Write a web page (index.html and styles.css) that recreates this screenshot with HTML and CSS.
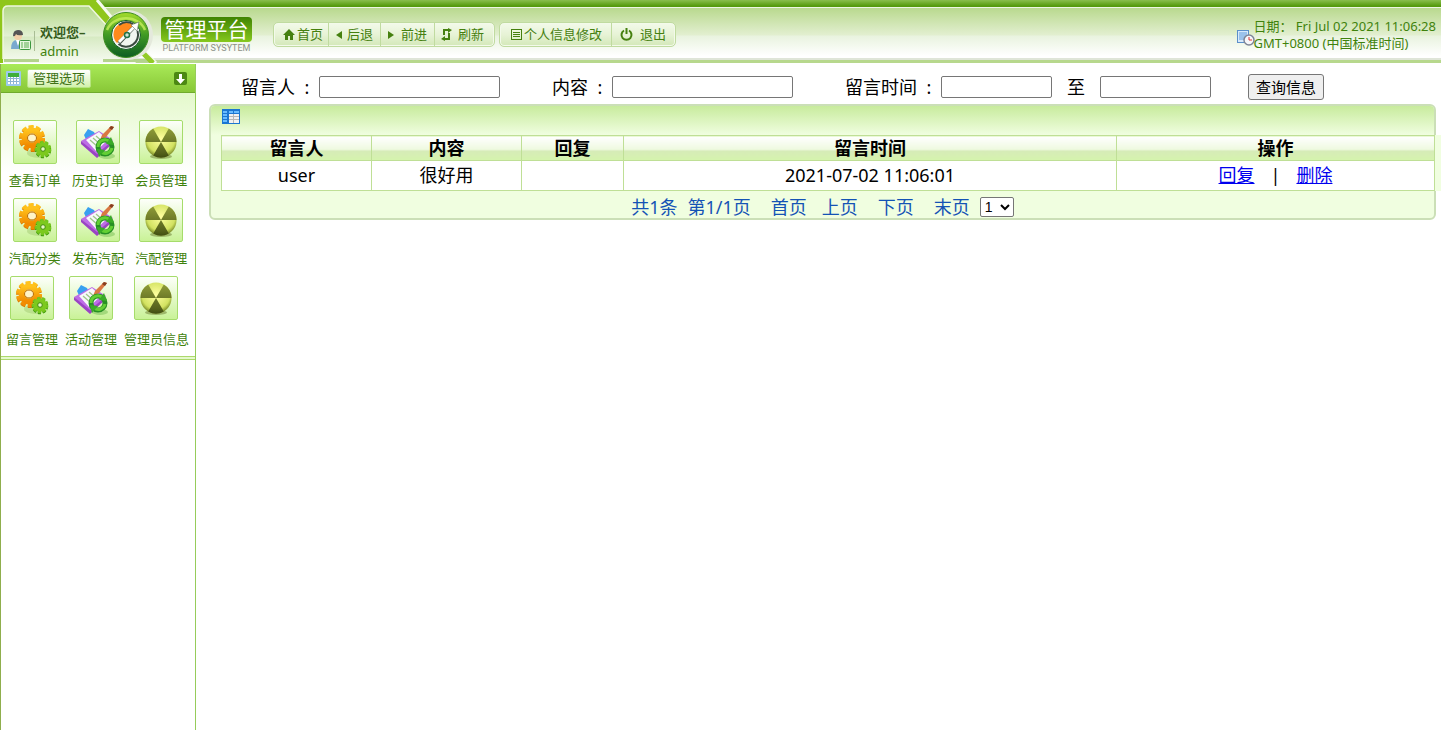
FILE: index.html
```html
<!DOCTYPE html>
<html lang="zh-CN">
<head>
    <meta charset="UTF-8">
    <meta name="viewport" content="width=device-width, initial-scale=1.0">
    <title>管理平台</title>
    <link rel="stylesheet" href="styles.css">
</head>
<body>
    <!-- shared icons -->
    <svg width="0" height="0" class="defs">
        <defs>
            <linearGradient id="gold" x1="0" y1="0" x2="0" y2="1"><stop offset="0" stop-color="#ffc21c"/><stop offset="1" stop-color="#f18a00"/></linearGradient>
            <radialGradient id="ballLight" cx=".5" cy=".4" r=".6"><stop offset="0" stop-color="#ffffa0"/><stop offset="1" stop-color="#c3d84c"/></radialGradient>
            <linearGradient id="ballDark" x1="0" y1="0" x2="0" y2="1"><stop offset="0" stop-color="#8d9a38"/><stop offset="1" stop-color="#4a5516"/></linearGradient>
            <radialGradient id="ballShade" cx=".5" cy=".4" r=".6"><stop offset=".75" stop-color="#4a5a10" stop-opacity="0"/><stop offset="1" stop-color="#3b4810" stop-opacity=".6"/></radialGradient>
            <linearGradient id="ring" x1="0" y1="0" x2="0" y2="1"><stop offset="0" stop-color="#a4dc2c"/><stop offset=".5" stop-color="#3f9a24"/><stop offset="1" stop-color="#0d5c22"/></linearGradient>
            <linearGradient id="tab" x1="0" y1="0" x2="0" y2="1"><stop offset="0" stop-color="#b2d787"/><stop offset=".53" stop-color="#e3f1d4"/><stop offset=".54" stop-color="#d6eac2"/><stop offset="1" stop-color="#f7fbf2"/></linearGradient>
        </defs>
        <symbol id="gears" viewBox="0 0 36 36">
            <ellipse cx="22" cy="29" rx="12" ry="5" fill="#8fb95a" opacity=".35"/>
            <circle cx="15" cy="15" r="10.500" fill="none" stroke="#d87800" stroke-width="5" stroke-dasharray="4.200 2.400"/>
            <circle cx="15" cy="14" r="10.500" fill="none" stroke="url(#gold)" stroke-width="5" stroke-dasharray="4.400 2.200"/>
            <circle cx="15" cy="14" r="7.500" fill="none" stroke="url(#gold)" stroke-width="6"/>
            <ellipse cx="15" cy="14" rx="4.500" ry="4" fill="#fff4c8" stroke="#b96a00"/>
            <circle cx="26" cy="26" r="6.500" fill="none" stroke="#3f9a0c" stroke-width="3.500" stroke-dasharray="2.800 1.740"/>
            <circle cx="26" cy="25" r="6.500" fill="none" stroke="#74c51d" stroke-width="3.500" stroke-dasharray="3 1.540"/>
            <circle cx="26" cy="25" r="4.500" fill="none" stroke="#7cc91e" stroke-width="4.500"/>
            <circle cx="26" cy="25" r="2.300" fill="#e6f8c4" stroke="#3f8a0c"/>
        </symbol>
        <symbol id="notes" viewBox="0 0 36 36">
            <path d="M4 11l4-6 6 3 2 4-9 6z" fill="#38a0f0"/>
            <path d="M1 17L19 7l14 9-16 16z" fill="#bd6de6"/>
            <path d="M1 17l16 13 15-13v3L17 34 1 20z" fill="#9a44c4"/>
            <path d="M6 16L19 8l9 8-12 11z" fill="#f8f8fb"/>
            <path d="M10 16l8 7M13 14l7 6M16 12l7 6" stroke="#9fc789" stroke-width="1.300"/>
            <path d="M22 11L31 2l3 1-8 10-6 3z" fill="#d97842"/><path d="M29 4l2-2 3 1-2 3z" fill="#873f20"/>
            <ellipse cx="27" cy="32" rx="8" ry="3" fill="#75bd52" opacity=".5"/>
            <circle cx="25" cy="23" r="7" fill="none" stroke="#279024" stroke-width="5"/>
            <path d="M18 23a7 7 0 0 1 12-5M32 24a7 7 0 0 1-11 4" fill="none" stroke="#63cf34" stroke-width="3"/>
            <path d="M31 13l3 8-8-1zM19 33l-2-8 8 1z" fill="#3aab28"/>
        </symbol>
        <symbol id="ball" viewBox="0 0 36 36">
            <ellipse cx="18" cy="32.500" rx="11" ry="2.500" fill="#6a7a30" opacity=".5"/>
            <circle cx="18" cy="18" r="15.500" fill="url(#ballLight)"/>
            <path d="M18 18L2.500 18A15.500 15.500 0 0 1 10.200 4.600zM18 18l7.800-13.400A15.500 15.500 0 0 1 33.500 18zM18 18l7.800 13.400A15.500 15.500 0 0 1 10.200 31.400z" fill="url(#ballDark)"/>
            <circle cx="18" cy="18" r="15.500" fill="url(#ballShade)"/>
        </symbol>
    </svg>

    <header class="header">
        <div class="welcome">
            <svg class="welcome-art" width="160" height="63" viewBox="0 0 160 63">
                <path d="M0 0H98L126 32 155 63H150L126 40H3V63H0z" fill="#8fc61a"/>
                <path d="M97 0L118 25M144 51L156 63" stroke="#f6faef" stroke-width="3"/>
                <path d="M3 63V11q0-5 5-5H89L109 28 136 63z" fill="url(#tab)"/>
                <path d="M3 59V11q0-5 5-5H89L109 28" fill="none" stroke="#eff8df" stroke-width="1.500"/>
                <path d="M4 59H39V62H4zM103 59H148V62H103z" fill="#b3d38c"/>
                <path d="M140 50l13 13" stroke="#93cb28" stroke-width="5"/>
                <circle cx="128" cy="35" r="25" fill="#e4e9dc"/>
                <circle cx="126" cy="35" r="22.500" fill="url(#ring)" stroke="#3c8d1d"/>
                <path d="M107 30a20 17 0 0 1 38 0" fill="none" stroke="#c5ee5c" stroke-width="2.500" opacity=".8"/>
                <circle cx="126" cy="35" r="14.500" fill="#f1f5f0" stroke="#0f5b22"/>
                <path d="M134 26a12 12 0 1 0-17 17l9-8z" fill="#ff8a1c"/>
                <path d="M119 25a12 12 0 0 1 14-1M137.500 31a12 12 0 0 1-19 13" fill="none" stroke="#3a4a40" stroke-width="2"/>
                <path d="M119 43L133 28" stroke="#45544b" stroke-width="4"/>
                <path d="M119 42L134 27" stroke="#fff" stroke-width="3"/>
                <path d="M139 22l-2 9-6-6z" fill="#fff" stroke="#45544b" stroke-width=".5"/>
                <circle cx="127" cy="35" r="2.500" fill="#cfe5d4" stroke="#237247" stroke-width="1.500"/>
            </svg>
            <svg class="user-icon" width="20" height="22" viewBox="0 0 20 22">
                <path d="M0 19q0-9 6-9t7 9z" fill="#78a9cf"/><path d="M5 10h4l-2 6z" fill="#fff"/>
                <circle cx="7" cy="6" r="4" fill="#f3d0a9"/><path d="M2 6q0-6 5-6t5 5q-6 1-7-1-1 3-3 2z" fill="#555"/>
                <rect x="8.500" y="10.500" width="11" height="9" rx="1" fill="#e6f7df" stroke="#3b973e"/>
                <path d="M10 13h2M10 15h2M10 17h2M13 13h5M13 15h5M13 17h5" stroke="#5cad53"/>
            </svg>
            <div class="welcome-text"><b>欢迎您–</b><span>admin</span></div>
        </div>
        <div class="brand">
            <div class="brand-name">管理平台</div>
            <div class="brand-sub">PLATFORM SYSYTEM</div>
        </div>
        <nav class="nav">
            <a href="#"><svg width="12" height="12" viewBox="0 0 12 12"><path d="M6 0l6 6h-2v5H7V7H5v4H2V6H0z"/></svg>首页</a>
            <a href="#"><svg width="8" height="8" viewBox="0 0 8 8"><path d="M7 0v8L1 4z"/></svg>后退</a>
            <a href="#"><svg width="8" height="8" viewBox="0 0 8 8"><path d="M1 0v8l6-4z"/></svg>前进</a>
            <a href="#" class="refresh"><svg width="11" height="13" viewBox="0 0 11 13"><path d="M3 7V2h5M8 5v6H3" fill="none" stroke="#45800f" stroke-width="2"/><path d="M7 0l4 2-4 3zM4 8v5l-4-2z"/></svg>刷新</a>
        </nav>
        <nav class="nav nav-user">
            <a href="#"><svg width="11" height="11" viewBox="0 0 11 11"><path d="M0 0h11v11H0zM1 1v9h9V1zM2 3h7v1H2zM2 5h7v1H2zM2 7h7v1H2z" fill-rule="evenodd"/></svg>个人信息修改</a>
            <a href="#"><svg width="13" height="13" viewBox="0 0 13 13"><path d="M4 2.500a5 5 0 1 0 5 0M6.500 0v6" fill="none" stroke="#45800f" stroke-width="2"/></svg>退出</a>
        </nav>
        <div class="date">
            <svg width="18" height="16" viewBox="0 0 18 16">
                <rect x=".5" y=".5" width="11" height="12" fill="#d7e9fb" stroke="#5b8fca"/>
                <path d="M2 3h8M2 5h8M2 7h6M2 9h5" stroke="#5f9bdc"/>
                <circle cx="12" cy="10" r="5" fill="#f6f7fa" stroke="#7d8496" stroke-width="1.500"/>
                <path d="M12 7v3h3" fill="none" stroke="#d33"/>
            </svg>
            <span>日期：&nbsp;Fri Jul 02 2021 11:06:28<br>GMT+0800 (中国标准时间)</span>
        </div>
    </header>

    <div class="page">
        <aside class="sidebar">
            <div class="sidebar-title">
                <svg width="15" height="15" viewBox="0 0 15 15">
                    <rect width="15" height="15" rx="1" fill="#9cc9ec"/><rect x="2" y="2" width="11" height="11" fill="#fff"/>
                    <path d="M2 7.500h11M2 10.500h11M4.500 5v8M7.500 5v8M10.500 5v8" stroke="#8eb3d3"/>
                    <path d="M2 2h11v4H2z" fill="#3eae3a"/>
                </svg>
                <h2>管理选项</h2>
                <button type="button" class="toggle" aria-label="收起">
                    <svg width="13" height="13" viewBox="0 0 13 13"><rect width="13" height="13" rx="2" fill="#4c8813"/><path d="M5 2h3v5h3l-4.500 5L2 7h3z" fill="#fff"/></svg>
                </button>
            </div>
            <div class="menu">
                <div class="menu-row">
                    <a href="#"><svg><use href="#gears"/></svg>查看订单</a>
                    <a href="#"><svg><use href="#notes"/></svg>历史订单</a>
                    <a href="#"><svg><use href="#ball"/></svg>会员管理</a>
                </div>
                <div class="menu-row">
                    <a href="#"><svg><use href="#gears"/></svg>汽配分类</a>
                    <a href="#"><svg><use href="#notes"/></svg>发布汽配</a>
                    <a href="#"><svg><use href="#ball"/></svg>汽配管理</a>
                </div>
                <div class="menu-row last">
                    <a href="#"><svg><use href="#gears"/></svg>留言管理</a>
                    <a href="#"><svg><use href="#notes"/></svg>活动管理</a>
                    <a href="#"><svg><use href="#ball"/></svg>管理员信息</a>
                </div>
            </div>
        </aside>

        <main class="main">
            <form class="search">
                <label for="author">留言人<i>:</i></label><input type="text" id="author">
                <label for="content">内容<i>:</i></label><input type="text" id="content">
                <label for="from">留言时间<i>:</i></label><input type="text" id="from" class="short">
                <label for="to" class="to">至</label><input type="text" id="to" class="short">
                <button type="button">查询信息</button>
            </form>

            <section class="panel">
                <div class="panel-head">
                    <svg width="18" height="15" viewBox="0 0 18 15">
                        <rect width="18" height="15" fill="#1b76d2"/>
                        <path d="M7 5h10v9H7z" fill="#f1f1f1"/>
                        <path d="M1 2h4v2H1zM1 5h4v2H1zM1 8h4v2H1zM1 11h4v2H1zM7 2h4v2H7zM12 2h5v2h-5z" fill="#69bcff"/>
                        <path d="M7 7.500h10M7 10.500h10M11.500 5v9" stroke="#b7b7b7"/>
                    </svg>
                </div>
                <div class="panel-body">
                    <table>
                        <thead>
                            <tr>
                                <th class="col-author">留言人</th>
                                <th class="col-content">内容</th>
                                <th class="col-reply">回复</th>
                                <th>留言时间</th>
                                <th class="col-action">操作</th>
                            </tr>
                        </thead>
                        <tbody>
                            <tr>
                                <td>user</td>
                                <td>很好用</td>
                                <td></td>
                                <td>2021-07-02 11:06:01</td>
                                <td><a href="#">回复</a><span class="bar">|</span><a href="#">删除</a></td>
                            </tr>
                        </tbody>
                    </table>
                </div>
                <div class="pager">
                    <span>共1条</span>
                    <span>第1/1页</span>
                    <a href="#" class="wide">首页</a>
                    <a href="#">上页</a>
                    <a href="#" class="wide">下页</a>
                    <a href="#" class="wide">末页</a>
                    <select aria-label="页码"><option>1</option></select>
                </div>
            </section>
        </main>
    </div>
</body>
</html>
```

FILE: styles.css
```css
* { box-sizing: border-box; }
body { margin: 0; min-height: 100vh; display: flex; flex-direction: column; font-family: "Noto Sans", "Noto Sans CJK SC", sans-serif; font-size: 18px; line-height: 24px; color: #000; background: #fff; }
.defs { position: absolute; }
svg { flex-shrink: 0; }

/* header */
.header { display: flex; height: 63px; font-size: 13px; line-height: 17px; color: #3f820c; background: linear-gradient(#8abf4d, #559a0c 6px, #559a0c 7px, #edf6e2 7px, #edf6e2 8px, #b9d98e 8px, #e2efd0 35px, #e9f3df 36px, #fff 56px, #fff 58px, #dfe5d8 58px, #dfe5d8 60px, #b7d88d 60px); }
.welcome { position: relative; width: 160px; display: flex; padding-left: 11px; }
.welcome-art { position: absolute; left: 0; top: 0; }
.user-icon { position: relative; margin-top: 30px; }
.welcome-text { position: relative; margin: 23px 0 0 3px; padding-left: 6px; line-height: 19px; }
.welcome-text::before { content: ""; position: absolute; left: 0; top: 8px; height: 20px; border-left: 1px solid #a9bd95; }
.welcome-text b, .welcome-text span { display: block; }
.welcome-text b { color: #355c1b; }
.brand { width: 93px; padding-top: 17px; text-align: center; white-space: nowrap; }
.brand-name { height: 25px; margin: 0 1px; border-radius: 4px; background: linear-gradient(#3f8402, #86c81e); color: #fff; font-size: 21px; line-height: 24px; }
.brand-sub { color: #8c9187; font: 9px/12px Roboto, sans-serif; }
.nav { display: flex; height: 25px; margin: 22px 0 0 20px; border: 1px solid #c0dba0; border-radius: 5px; background: linear-gradient(#f3faea, #e7f3d6 50%, #d3e8b8); box-shadow: inset 0 0 0 1px #f3faea; }
.nav a { display: flex; align-items: center; gap: 4px; padding: 0 8px; color: #45800f; text-decoration: none; white-space: nowrap; }
.nav a:first-child { gap: 2px; padding: 0 5px 0 9px; }
.nav a + a { border-left: 1px solid #c0dba0; padding: 0 7px 0 6px; }
.nav a + a + a { gap: 6px; }
.nav .refresh { padding-right: 10px; }
.nav svg { fill: #45800f; }
.nav-user { margin-left: 4px; }
.nav-user a:first-child { padding: 0 9px 0 11px; }
.nav-user a + a { gap: 7px; padding: 0 9px 0 8px; }
.date { display: flex; margin: 18px 5px 0 auto; white-space: nowrap; }
.date svg { margin-top: 12px; margin-right: -2px; }

/* sidebar */
.page { flex: 1; display: flex; padding-top: 1px; }
.sidebar { flex: none; width: 196px; border: solid #96cc5a; border-width: 0 1px; border-left-color: #8fae4d; font-size: 13px; }
.sidebar-title { display: flex; align-items: center; height: 29px; padding: 0 8px 0 5px; background: linear-gradient(#a9ea58, #88c737); border-bottom: 1px solid #6fab2c; }
.sidebar-title h2 { margin: 0 0 0 6px; padding: 0 5px; border: 1px solid #b6e57f; border-radius: 2px; background: linear-gradient(#fff, #d2f1ab); color: #3f7216; font-size: 13px; font-weight: normal; line-height: 17px; }
.toggle { margin-left: auto; padding: 0; border: 0; background: none; line-height: 0; }
.menu { padding: 27px 2px 2px; background: linear-gradient(#e4f9cb, #fff 80px); border-bottom: 4px double #add86c; }
.menu-row { display: flex; height: 78px; }
.menu-row a { flex: 1; display: flex; flex-direction: column; align-items: center; gap: 4px; color: #3f820c; text-decoration: none; white-space: nowrap; }
.menu-row svg { width: 44px; height: 44px; padding: 3px; border: 1px solid #a6dc6b; border-radius: 2px; background: linear-gradient(#fdfffa, #c9f297); }
.menu .last { justify-content: space-between; padding: 0 4px 0 3px; }
.menu .last a { flex: none; gap: 7px; }

/* content */
.main { flex: 1; min-width: 0; padding: 0 5px 0 13px; }
.search { display: flex; align-items: center; height: 40px; padding: 5px 0 0 32px; white-space: nowrap; }
.search i { display: inline-block; width: 24px; text-align: center; font-style: normal; }
.search input { width: 181px; height: 22px; border: 1px solid #767676; border-radius: 2px; background: #fff; }
.search input + label { margin-left: 52px; }
.search .short { width: 111px; }
.search input + .to { margin: 0 15px; }
.search button { height: 26px; margin-left: 37px; padding: 0 7px; border: 1px solid #767676; border-radius: 3px; background: #efefef; color: #000; font: 15px/22px "Noto Sans", "Noto Sans CJK SC", sans-serif; }
.panel { border: 2px solid #cbdfb7; border-radius: 6px; background: #f0fee0; }
.panel-head { height: 29px; padding: 3px 11px; border-radius: 4px 4px 0 0; background: linear-gradient(#c8eb9d, #f0fee0); line-height: 0; }
.panel-body { margin-right: -7px; padding: 0 6px 0 10px; background: #f0fee0; }
table { width: 100%; border-collapse: collapse; table-layout: fixed; text-align: center; background: #fff; }
th, td { border: 1px solid #bfdf96; padding: 0; }
th { height: 25px; background: linear-gradient(#fff, #eef9df 55%, #d6ebb8 60%, #d5f4ad); }
td { height: 30px; padding-bottom: 2px; }
td a { color: #00e; }
.bar { margin: 0 16px; }
.col-author, .col-content { width: 150px; }
.col-reply { width: 102px; }
.col-action { width: 318px; }
.pager { display: flex; justify-content: center; align-items: center; gap: 10px; height: 27px; padding-top: 4px; color: #1453b5; }
.pager a { color: #1453b5; text-decoration: none; margin-left: 5px; }
.pager .wide { margin-left: 10px; }
.pager select { width: 34px; height: 20px; border: 1px solid #767676; border-radius: 2px; background: #fff; font: 14px "Liberation Sans", sans-serif; }
```
